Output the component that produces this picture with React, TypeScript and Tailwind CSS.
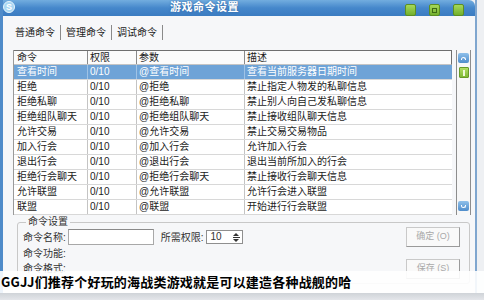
// 游戏命令设置 — command settings dialog (XP style) with caption overlay

const FONT = { fontFamily: '"Liberation Sans", "Noto Sans CJK SC", sans-serif' };

// ── 命令列表 ──
const COMMANDS = [
  { name: "查看时间", level: "0/10", param: "@查看时间", desc: "查看当前服务器日期时间" },
  { name: "拒绝", level: "0/10", param: "@拒绝", desc: "禁止指定人物发的私聊信息" },
  { name: "拒绝私聊", level: "0/10", param: "@拒绝私聊", desc: "禁止别人向自己发私聊信息" },
  { name: "拒绝组队聊天", level: "0/10", param: "@拒绝组队聊天", desc: "禁止接收组队聊天信息" },
  { name: "允许交易", level: "0/10", param: "@允许交易", desc: "禁止交易交易物品" },
  { name: "加入行会", level: "0/10", param: "@加入行会", desc: "允许加入行会" },
  { name: "退出行会", level: "0/10", param: "@退出行会", desc: "退出当前所加入的行会" },
  { name: "拒绝行会聊天", level: "0/10", param: "@拒绝行会聊天", desc: "禁止接收行会聊天信息" },
  { name: "允许联盟", level: "0/10", param: "@允许联盟", desc: "允许行会进入联盟" },
  { name: "联盟", level: "0/10", param: "@联盟", desc: "开始进行行会联盟" },
];

const TABS = ["普通命令", "管理命令", "调试命令"];

function GreenButton({ inner = false }: { inner?: boolean }) {
  return (
    <div className="w-[11px] h-[12px] rounded-[2px] border border-[#5c8f22] bg-gradient-to-b from-[#a6d95a] to-[#72b02c] flex items-center justify-center">
      {inner && <div className="w-[5px] h-[5px] border border-[#3f6a14]" />}
    </div>
  );
}

function TitleBar() {
  return (
    <div className="h-[16px] flex items-start bg-gradient-to-b from-[#72addf] via-[#4587cb] to-[#3b7cc1] rounded-tr-[6px]">
      {/* 图标 */}
      <div className="mt-[1px] w-[12px] h-[12px] rounded-full bg-[#a9d7f3] border border-[#e6f4fc] flex items-center justify-center text-[9px] font-bold text-white leading-none">
        S
      </div>
      <span className="ml-[155px] mt-[1px] text-[11px] leading-[13px] font-bold text-white tracking-[0.5px] [text-shadow:0_0_2px_#2a5f99]">
        游戏命令设置
      </span>
      <div className="flex-1" />
      <div className="flex gap-[13px] mt-[4px] mr-[11px]">
        <GreenButton />
        <GreenButton inner />
        <GreenButton />
      </div>
    </div>
  );
}

function Row({ cmd, selected }: { cmd: (typeof COMMANDS)[number]; selected: boolean }) {
  const line = selected ? "border-[#9fc3e6]" : "border-[#c4c4c4]";
  return (
    <div
      className={`grid grid-cols-[74px_49px_108px_206px] h-[15px] border-b border-[#d8d8d8] text-[10px] leading-[14px] ${
        selected ? "bg-[#6ea3d7] text-white" : "text-[#1b1b1b]"
      }`}
    >
      <div className={`pl-[3px] border-r ${line} truncate`}>{cmd.name}</div>
      <div className={`pl-[2px] border-r ${line}`}>{cmd.level}</div>
      <div className={`pl-[2px] border-r ${line} truncate`}>{cmd.param}</div>
      <div className="pl-[2px] truncate">{cmd.desc}</div>
    </div>
  );
}

function ScrollBar() {
  return (
    <div className="w-[15px] flex flex-col items-center border-x border-[#8d8d8d] bg-[#f7f7f7] pt-[3px] pb-[4px]">
      <div className="w-[11px] h-[10px] rounded-[2px] bg-gradient-to-b from-[#8fc0ea] to-[#4f8dcb] flex items-center justify-center">
        <div className="w-[5px] h-[3px] border-t border-x border-white rounded-t-full" />
      </div>
      <div className="mt-[4px] w-[10px] h-[11px] rounded-[1px] bg-gradient-to-b from-[#b2de62] to-[#7fb935] border border-[#679a28] flex items-center justify-center">
        <div className="w-[2px] h-[6px] bg-[#eef8d8]" />
      </div>
      <div className="flex-1" />
      <div className="w-[11px] h-[10px] rounded-[2px] bg-gradient-to-b from-[#8fc0ea] to-[#4f8dcb] flex items-center justify-center">
        <div className="w-[5px] h-[3px] border-b border-x border-white rounded-b-full" />
      </div>
    </div>
  );
}

function XpButton({ label }: { label: string }) {
  return (
    <div className="w-[54px] h-[20px] border border-[#c9c9c9] border-r-[#9a9a9a] border-b-[#9a9a9a] bg-[#f9f9f9] flex items-center justify-center text-[9px] text-[#a9a9a9]">
      {label}
    </div>
  );
}

export default function App() {
  return (
    <div className="w-[484px] h-[300px] relative overflow-hidden bg-[#eef0f3]" style={FONT}>
      {/* ── 窗口 ── */}
      <div className="w-[477px] h-[300px] flex flex-col border-l-[3px] border-r-[2px] border-[#4f8bc9] border-r-[#7fa6cf]">
        <TitleBar />

        <div className="flex-1 bg-[#f6f7f9] pl-[10px] pr-[4px] flex flex-col">
          {/* 标签页 */}
          <div className="mt-[8px] h-[17px] flex items-center text-[10px] text-[#222]">
            <span className="ml-[2px]">普通命令</span>
            {TABS.slice(1).map((t) => (
              <span key={t} className="flex items-center">
                <span className="mx-[5px] w-px h-[15px] bg-[#8a8a8a]" />
                <span>{t}</span>
              </span>
            ))}
            <span className="ml-[5px] w-px h-[15px] bg-[#8a8a8a]" />
          </div>

          {/* 命令列表 */}
          <div className="mt-[9px] flex gap-[4px]">
            <div className="w-[439px] border-l border-[#9a9a9a] bg-white">
              <div className="grid grid-cols-[74px_49px_108px_206px] h-[15px] border-t border-r border-[#6f6f6f] border-b border-b-[#c4c4c4] bg-[#fbfbfb] text-[10px] leading-[13px] text-[#1b1b1b]">
                <div className="pl-[3px] border-r border-[#8a8a8a]">命令</div>
                <div className="pl-[2px] border-r border-[#8a8a8a]">权限</div>
                <div className="pl-[2px] border-r border-[#8a8a8a]">参数</div>
                <div className="pl-[2px]">描述</div>
              </div>
              {COMMANDS.map((c, i) => (
                <Row key={c.name} cmd={c} selected={i === 0} />
              ))}
            </div>
            <ScrollBar />
          </div>

          {/* 命令设置 */}
          <fieldset className="mt-[1px] ml-[4px] mr-[1px] border border-[#c8c8c8] rounded-[3px] pl-[5px] pr-[9px] pb-[4px] flex">
            <legend className="ml-[3px] px-[2px] text-[10px] leading-[12px] text-[#333]">命令设置</legend>
            <div className="flex-1 flex flex-col text-[10px] text-[#333]">
              <div className="mt-[1px] h-[16px] flex items-center">
                <span>命令名称:</span>
                <div className="ml-[2px] w-[86px] h-[16px] border border-[#a8a8a8] border-t-[#8a8a8a] bg-white" />
                <span className="ml-[7px]">所需权限:</span>
                <div className="ml-[2px] w-[37px] h-[14px] border border-[#8f8f8f] bg-white flex items-center justify-between pl-[4px] pr-[2px]">
                  <span className="text-[10px] leading-none">10</span>
                  <span className="flex flex-col items-center gap-[1px]">
                    <span className="w-0 h-0 border-x-[3px] border-x-transparent border-b-[3px] border-b-[#333]" />
                    <span className="w-[7px] h-px bg-[#333]" />
                    <span className="w-0 h-0 border-x-[3px] border-x-transparent border-t-[3px] border-t-[#333]" />
                  </span>
                </div>
              </div>
              <div className="mt-[1px] h-[15px] flex items-center">命令功能:</div>
              <div className="h-[15px] flex items-center">命令格式:</div>
            </div>
            <div className="flex flex-col gap-[12px] mt-[-1px]">
              <XpButton label="确定 (O)" />
              <XpButton label="保存 (S)" />
            </div>
          </fieldset>
        </div>
      </div>

      {/* ── 标题字幕 ── */}
      <div className="absolute left-0 right-0 top-[271px] h-[22px] bg-white/90 flex items-center pl-[1px]">
        <span
          className="text-[13px] font-bold text-black tracking-[0.2px] whitespace-nowrap"
          style={{ fontFamily: '"Noto Sans CJK SC", sans-serif' }}
        >
          GGJJ们推荐个好玩的海战类游戏就是可以建造各种战舰的哈
        </span>
      </div>
      <div className="absolute left-0 right-0 top-[293px] h-[7px] bg-gradient-to-b from-[#cfd3d8] to-[#e4e6ea]" />
    </div>
  );
}
